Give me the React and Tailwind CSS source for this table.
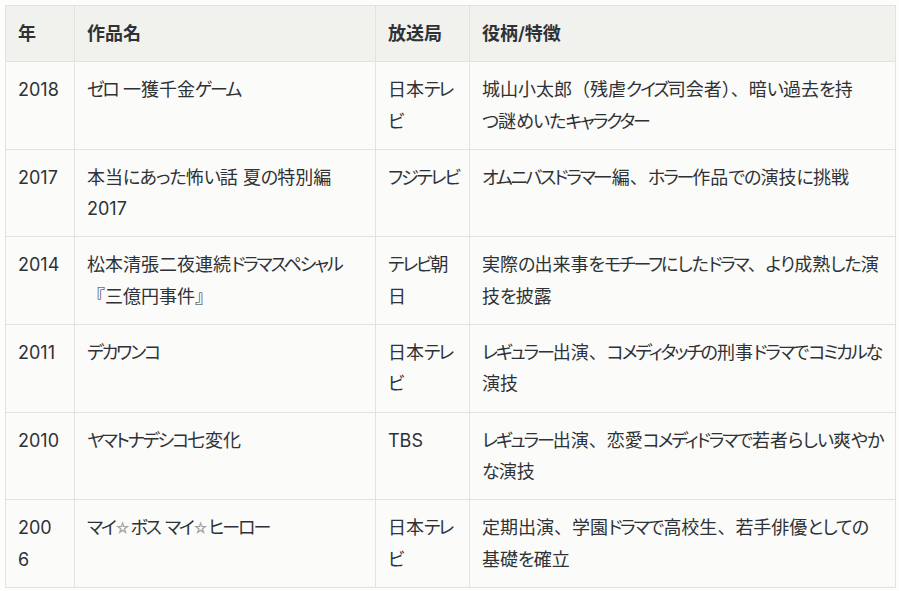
import React from "react";

const rows = [
  { y: ["2018"], t: ["ゼロ 一獲千金ゲーム"], s: ["日本テレ", "ビ"], d: ["城山小太郎（残虐クイズ司会者）、暗い過去を持", "つ謎めいたキャラクター"] },
  { y: ["2017"], t: ["本当にあった怖い話 夏の特別編", "2017"], s: ["フジテレビ"], d: ["オムニバスドラマ一編、ホラー作品での演技に挑戦"] },
  { y: ["2014"], t: ["松本清張二夜連続ドラマスペシャル", "『三億円事件』"], s: ["テレビ朝", "日"], d: ["実際の出来事をモチーフにしたドラマ、より成熟した演", "技を披露"] },
  { y: ["2011"], t: ["デカワンコ"], s: ["日本テレ", "ビ"], d: ["レギュラー出演、コメディタッチの刑事ドラマでコミカルな", "演技"] },
  { y: ["2010"], t: ["ヤマトナデシコ七変化"], s: ["TBS"], d: ["レギュラー出演、恋愛コメディドラマで若者らしい爽やか", "な演技"] },
  { y: ["200", "6"], t: ["マイ☆ボス マイ☆ヒーロー"], s: ["日本テレ", "ビ"], d: ["定期出演、学園ドラマで高校生、若手俳優としての", "基礎を確立"] },
];

const re = /([\u30A0-\u30FF]+)|([\u3040-\u309F]+)|([（）、『』]+)|(☆)|([^\u30A0-\u30FF\u3040-\u309F（）、『』☆]+)/g;

function Seg({ text }) {
  const out = [];
  let m;
  let k = 0;
  re.lastIndex = 0;
  while ((m = re.exec(text)) !== null) {
    if (m[1]) out.push(<span key={k++} className="tracking-[-2.1px]">{m[1]}</span>);
    else if (m[2]) out.push(<span key={k++} className="tracking-[-0.9px]">{m[2]}</span>);
    else if (m[3]) out.push(<span key={k++} className="[font-feature-settings:normal]">{m[3]}</span>);
    else if (m[4]) out.push(<span key={k++} className="text-[15px] text-[#a3a3a0]">{m[4]}</span>);
    else out.push(<span key={k++}>{m[5]}</span>);
  }
  return out;
}

function Lines({ lines }) {
  return lines.map((l, i) => (
    <span key={i} className="block whitespace-nowrap">
      <Seg text={l} />
    </span>
  ));
}

export default function App() {
  const cell = "border border-[#e3e3de] px-3 py-3 align-top";
  return (
    <div
      className="min-h-[591px] bg-[#fdfdfc] p-[5px] text-[18px] leading-[31.3px] text-[#2e3236] [font-feature-settings:'palt']"
      style={{ fontFamily: "Inter, 'Noto Sans CJK JP', sans-serif" }}
    >
      <table className="w-[890px] table-fixed border-collapse bg-[#fbfbf9]">
        <colgroup>
          <col className="w-[69px]" />
          <col className="w-[301px]" />
          <col className="w-[94px]" />
          <col className="w-[426px]" />
        </colgroup>
        <thead>
          <tr className="bg-[#f1f1ed] text-left">
            <th className={cell + " font-semibold"}>年</th>
            <th className={cell + " font-semibold"}>作品名</th>
            <th className={cell + " font-semibold"}>放送局</th>
            <th className={cell + " font-semibold"}>役柄/特徴</th>
          </tr>
        </thead>
        <tbody>
          {rows.map((r, i) => (
            <tr key={i}>
              <td className={cell}><Lines lines={r.y} /></td>
              <td className={cell}><Lines lines={r.t} /></td>
              <td className={cell}><Lines lines={r.s} /></td>
              <td className={cell}><Lines lines={r.d} /></td>
            </tr>
          ))}
        </tbody>
      </table>
    </div>
  );
}
